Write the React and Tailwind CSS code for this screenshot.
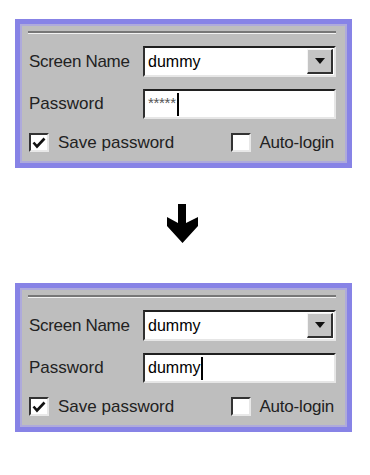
import React from 'react';

const font = { fontFamily: '"Liberation Sans", Arial, sans-serif' };

const Sunken = ({ className = '', children }) => (
  <div
    className={`bg-white border-t-2 border-l-2 border-t-[#202020] border-l-[#303030] border-b-2 border-r-2 border-b-[#e6e6e6] border-r-[#e6e6e6] ${className}`}
  >
    {children}
  </div>
);

const Checkbox = ({ checked }) => (
  <div className="w-[20px] h-[19px] bg-white border-t-2 border-l-2 border-t-[#333] border-l-[#333] border-b-2 border-r-2 border-b-[#e8e8e8] border-r-[#e8e8e8] flex items-center justify-center">
    {checked && (
      <svg width="14" height="12" viewBox="0 0 14 12">
        <path d="M1.5 5.5 L5 9.5 L12.5 1.5" fill="none" stroke="#111" strokeWidth="2.6" />
      </svg>
    )}
  </div>
);

const LoginPanel = ({ masked }) => (
  <div className="w-[337px] h-[149px] border-[5px] border-[#8783e6] bg-[#bebebe] shadow-[inset_0_0_0_2px_#aeaadb] pt-[7px] pl-[8px] pr-[11px]">
    <div className="h-[3px] border-t-2 border-t-[#777] border-b border-b-[#f2f2f2]" />

    <div className="flex items-center mt-[12px] h-[31px]">
      <span className="w-[115px] pl-[1px] text-[17px] text-[#222] tracking-[-0.3px]">Screen Name</span>
      <Sunken className="flex-1 h-[31px] flex items-center">
        <span className="pl-[3px] text-[16px] text-black flex-1">dummy</span>
        <div className="w-[26px] h-[25px] mr-[1px] bg-[#c4c4c4] border-t border-l border-t-[#f4f4f4] border-l-[#f4f4f4] border-b-2 border-r-2 border-b-[#303030] border-r-[#303030] flex items-center justify-center">
          <svg width="10" height="6" viewBox="0 0 10 6">
            <polygon points="0,0 10,0 5,6" fill="#111" />
          </svg>
        </div>
      </Sunken>
    </div>

    <div className="flex items-center mt-[12px] h-[30px]">
      <span className="w-[115px] pl-[1px] text-[17px] text-[#222]">Password</span>
      <Sunken className="flex-1 h-[30px] flex items-center">
        {masked ? (
          <span className="pl-[3px] text-[15px] leading-none text-[#555] self-start mt-[4px] tracking-[-0.3px]">*****</span>
        ) : (
          <span className="pl-[3px] text-[16px] text-black">dummy</span>
        )}
        <div className="w-[2px] h-[23px] bg-black ml-[1px]" />
      </Sunken>
    </div>

    <div className="flex items-center mt-[14px] h-[19px] pl-[1px] pr-[2px]">
      <Checkbox checked />
      <span className="ml-[9px] text-[17px] text-[#222] flex-1">Save password</span>
      <Checkbox />
      <span className="ml-[8px] text-[17px] text-[#222] tracking-[-0.2px]">Auto-login</span>
    </div>
  </div>
);

export default function App() {
  return (
    <div className="w-[370px] h-[475px] bg-white pt-[19px] pl-[15px]" style={font}>
      <LoginPanel masked />
      <svg className="block ml-[152px] mt-[36px]" width="32" height="40" viewBox="0 0 32 40">
        <polygon points="11,0 19,0 19,19 31,13 31,22 15.5,39 0,22 0,13 11,19" fill="#000" />
      </svg>
      <div className="mt-[39px]">
        <LoginPanel />
      </div>
    </div>
  );
}
